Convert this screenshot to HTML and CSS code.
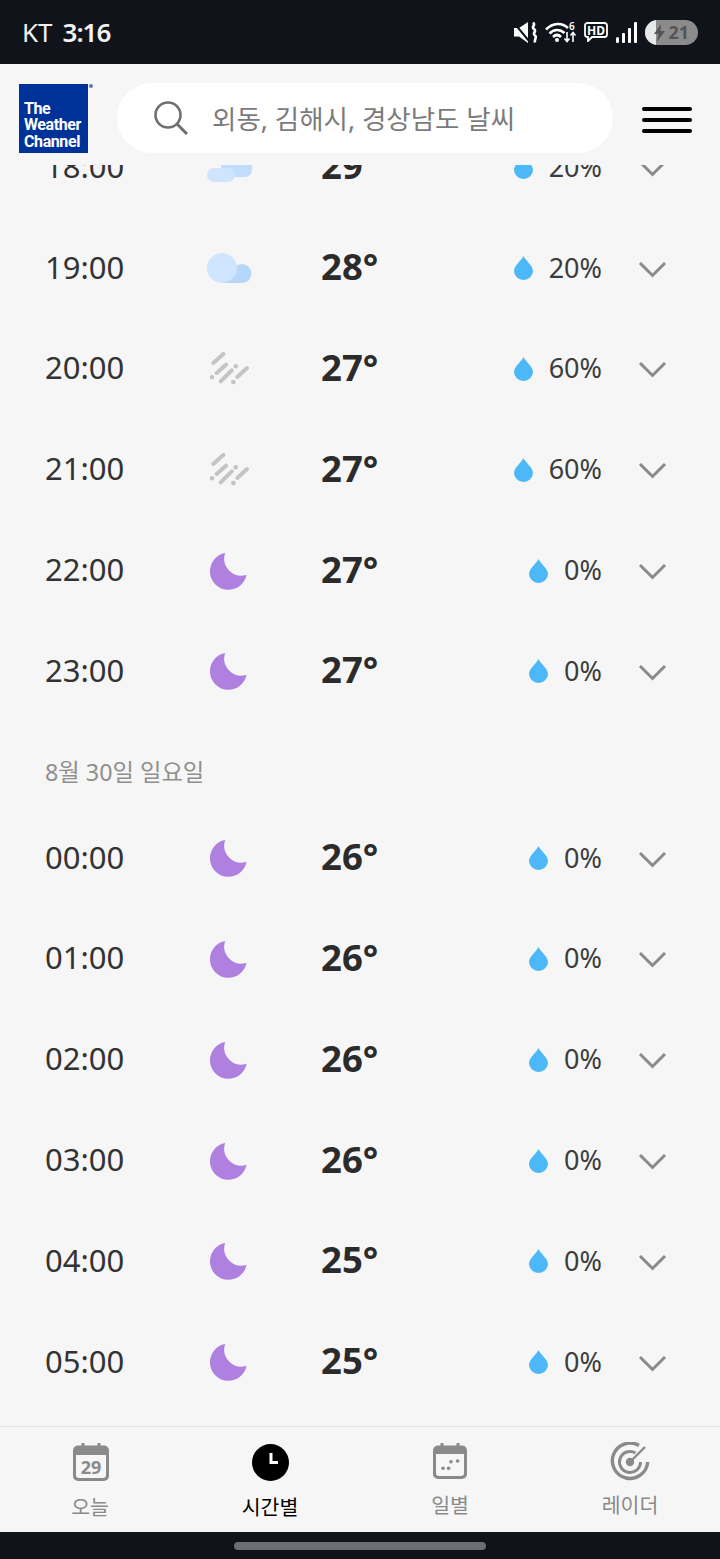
FILE: index.html
```html
<!DOCTYPE html>
<html lang="ko">
<head>
  <meta charset="UTF-8" />
  <meta name="viewport" content="width=device-width, initial-scale=1.0"/>
  <title>시간별 날씨 - The Weather Channel</title>
  <link rel="stylesheet" href="styles.css">
</head>
<body>
  <svg class="icon-defs" width="0" height="0">
    <symbol id="moon" viewBox="0 0 40 40">
      <path d="M16 1A19.5 19.5 0 1 0 38.5 24A18 18 0 0 1 16 1Z" fill="#af80e0"/>
    </symbol>
    <symbol id="cloud" viewBox="0 0 46 32">
      <path d="M16 19H36A9.5 9.5 0 0 1 36 31H16Z" fill="#b7d7fa"/>
      <circle cx="36" cy="21.5" r="9.5" fill="#b7d7fa"/>
      <path d="M16 1A15 15 0 0 1 16 31A15 15 0 0 1 16 1Z" fill="#cfe4ff"/>
    </symbol>
    <symbol id="rain" viewBox="0 0 40 33">
      <g fill="none" stroke="#c4c4c4" stroke-width="4" stroke-linecap="round">
        <path d="M4.3 11L14.3 1.9M7.7 21L17 12.7M11.7 29.3L22.7 18.3M28.3 25L38 16"/>
        <path d="M3 25.3h.1M26.7 14.3h.1M24.3 30h.1" stroke-width="4.6"/>
      </g>
    </symbol>
    <symbol id="drop" viewBox="0 0 19 24">
      <path d="M9.5 0C11.5 4.5 19 9.5 19 15A9.5 9 0 0 1 0 15C0 9.5 7.5 4.5 9.5 0Z" fill="#4db8f7"/>
    </symbol>
    <symbol id="chevron" viewBox="0 0 29 17">
      <path d="M2 2L14.5 14.5L27 2" fill="none" stroke="#8a8a8a" stroke-width="3"/>
    </symbol>
  </svg>

  <div class="status-bar">
    <div class="status-left"><span>KT</span> <b>3:16</b></div>
    <div class="status-icons">
      <svg width="23" height="21" viewBox="0 0 23 21">
        <path d="M0 6H5L14 0V21L5 14.500H0Z" fill="#fff"/>
        <path d="M0 1L15 19" stroke="#10131a" stroke-width="2"/>
        <path d="M19 0.500c3.500 3-2.500 4 1 6.500c3.500 2.500-2.500 4 1 6.500c2.500 2-1 3 0 7" fill="none" stroke="#fff" stroke-width="2.600"/>
      </svg>
      <svg width="31" height="22" viewBox="0 0 31 22">
        <g fill="none" stroke="#fff" stroke-width="2.600">
          <path d="M1 8.500C8 1.500 17 1.500 23 7"/>
          <path d="M4.500 12.500C9 8 15 8 19.500 12"/>
          <path d="M8 16C10.500 13.500 13.500 13.500 16 16"/>
        </g>
        <circle cx="12" cy="19" r="2" fill="#fff"/>
        <text x="24" y="9" class="wifi-six">6</text>
        <path d="M22 11V20M19.500 17.500L22 20.500L24.500 17.500M28 21V12M25.500 14.500L28 11.500L30.500 14.500" fill="none" stroke="#fff" stroke-width="1.600"/>
      </svg>
      <svg width="24" height="20" viewBox="0 0 24 20">
        <path d="M3.500 1H20.500A2.500 2.500 0 0 1 23 3.500V12.500A2.500 2.500 0 0 1 20.500 15H8L4 19V15H3.500A2.500 2.500 0 0 1 1 12.500V3.500A2.500 2.500 0 0 1 3.500 1Z" fill="none" stroke="#fff" stroke-width="1.800"/>
        <text x="12" y="12.500" class="hd-text">HD</text>
      </svg>
      <svg width="21" height="21" viewBox="0 0 21 21">
        <g fill="#fff">
          <rect x="0" y="15" width="3" height="6" rx="1.500"/>
          <rect x="6" y="11" width="3" height="10" rx="1"/>
          <rect x="12" y="6" width="3" height="15" rx="1"/>
          <rect x="18" y="0" width="3" height="21" rx="1"/>
        </g>
      </svg>
      <div class="battery">
        <div class="battery-fill"></div>
        <svg class="battery-bolt" width="11" height="18" viewBox="0 0 11 18">
          <path d="M7 0L0 10H4.500L3 18L11 7H6.500Z" fill="#555"/>
        </svg>
        <span class="battery-num">21</span>
      </div>
    </div>
  </div>

  <header class="top-bar">
    <div class="logo">
      <span>The</span>
      <span>Weather</span>
      <span>Channel</span>
      <i class="logo-mark"></i>
    </div>
    <div class="search">
      <svg width="34" height="34" viewBox="0 0 34 34">
        <circle cx="14" cy="14" r="12.500" fill="none" stroke="#6e6e6e" stroke-width="2.600"/>
        <path d="M23 23L33 33" stroke="#6e6e6e" stroke-width="3"/>
      </svg>
      <span class="search-text">외동, 김해시, 경상남도 날씨</span>
    </div>
    <div class="menu">
      <span></span>
      <span></span>
      <span></span>
    </div>
  </header>

  <main class="list">
    <div class="list-inner">
      <div class="row">
        <div class="time">18:00</div>
        <svg class="wx" width="46" height="32" viewBox="0 0 46 32">
          <rect x="15" y="0" width="31" height="26" rx="7" fill="#c2dcfd"/>
          <rect x="1" y="17" width="28" height="14" rx="7" fill="#cfe4ff"/>
        </svg>
        <div class="temp">29°</div>
        <div class="precip"><svg width="19" height="24"><use href="#drop"/></svg><span>20%</span></div>
        <svg class="chev" width="29" height="17"><use href="#chevron"/></svg>
      </div>
      <div class="row">
        <div class="time">19:00</div>
        <svg class="wx" width="46" height="32"><use href="#cloud"/></svg>
        <div class="temp">28°</div>
        <div class="precip"><svg width="19" height="24"><use href="#drop"/></svg><span>20%</span></div>
        <svg class="chev" width="29" height="17"><use href="#chevron"/></svg>
      </div>
      <div class="row">
        <div class="time">20:00</div>
        <svg class="wx" width="40" height="33"><use href="#rain"/></svg>
        <div class="temp">27°</div>
        <div class="precip"><svg width="19" height="24"><use href="#drop"/></svg><span>60%</span></div>
        <svg class="chev" width="29" height="17"><use href="#chevron"/></svg>
      </div>
      <div class="row">
        <div class="time">21:00</div>
        <svg class="wx" width="40" height="33"><use href="#rain"/></svg>
        <div class="temp">27°</div>
        <div class="precip"><svg width="19" height="24"><use href="#drop"/></svg><span>60%</span></div>
        <svg class="chev" width="29" height="17"><use href="#chevron"/></svg>
      </div>
      <div class="row">
        <div class="time">22:00</div>
        <svg class="wx" width="38" height="38"><use href="#moon"/></svg>
        <div class="temp">27°</div>
        <div class="precip"><svg width="19" height="24"><use href="#drop"/></svg><span>0%</span></div>
        <svg class="chev" width="29" height="17"><use href="#chevron"/></svg>
      </div>
      <div class="row">
        <div class="time">23:00</div>
        <svg class="wx" width="38" height="38"><use href="#moon"/></svg>
        <div class="temp">27°</div>
        <div class="precip"><svg width="19" height="24"><use href="#drop"/></svg><span>0%</span></div>
        <svg class="chev" width="29" height="17"><use href="#chevron"/></svg>
      </div>

      <div class="date-label">8월 30일 일요일</div>

      <div class="row">
        <div class="time">00:00</div>
        <svg class="wx" width="38" height="38"><use href="#moon"/></svg>
        <div class="temp">26°</div>
        <div class="precip"><svg width="19" height="24"><use href="#drop"/></svg><span>0%</span></div>
        <svg class="chev" width="29" height="17"><use href="#chevron"/></svg>
      </div>
      <div class="row">
        <div class="time">01:00</div>
        <svg class="wx" width="38" height="38"><use href="#moon"/></svg>
        <div class="temp">26°</div>
        <div class="precip"><svg width="19" height="24"><use href="#drop"/></svg><span>0%</span></div>
        <svg class="chev" width="29" height="17"><use href="#chevron"/></svg>
      </div>
      <div class="row">
        <div class="time">02:00</div>
        <svg class="wx" width="38" height="38"><use href="#moon"/></svg>
        <div class="temp">26°</div>
        <div class="precip"><svg width="19" height="24"><use href="#drop"/></svg><span>0%</span></div>
        <svg class="chev" width="29" height="17"><use href="#chevron"/></svg>
      </div>
      <div class="row">
        <div class="time">03:00</div>
        <svg class="wx" width="38" height="38"><use href="#moon"/></svg>
        <div class="temp">26°</div>
        <div class="precip"><svg width="19" height="24"><use href="#drop"/></svg><span>0%</span></div>
        <svg class="chev" width="29" height="17"><use href="#chevron"/></svg>
      </div>
      <div class="row">
        <div class="time">04:00</div>
        <svg class="wx" width="38" height="38"><use href="#moon"/></svg>
        <div class="temp">25°</div>
        <div class="precip"><svg width="19" height="24"><use href="#drop"/></svg><span>0%</span></div>
        <svg class="chev" width="29" height="17"><use href="#chevron"/></svg>
      </div>
      <div class="row">
        <div class="time">05:00</div>
        <svg class="wx" width="38" height="38"><use href="#moon"/></svg>
        <div class="temp">25°</div>
        <div class="precip"><svg width="19" height="24"><use href="#drop"/></svg><span>0%</span></div>
        <svg class="chev" width="29" height="17"><use href="#chevron"/></svg>
      </div>
    </div>
  </main>

  <nav class="tabs">
    <div class="tab tab-today">
      <svg width="36" height="38" viewBox="0 0 36 38">
        <path d="M10 0V5M26 0V5" stroke="#8a8a8a" stroke-width="3" stroke-linecap="round"/>
        <path d="M5 2.500H31A5 5 0 0 1 36 7.500V33A5 5 0 0 1 31 38H5A5 5 0 0 1 0 33V7.500A5 5 0 0 1 5 2.500ZM3 12V32A3 3 0 0 0 6 35H30A3 3 0 0 0 33 32V12Z" fill="#8a8a8a" fill-rule="evenodd"/>
        <text x="18" y="31" class="cal-day">29</text>
      </svg>
      <span class="tab-label">오늘</span>
    </div>
    <div class="tab tab-active">
      <svg width="37" height="37" viewBox="0 0 37 37">
        <circle cx="18.500" cy="18.500" r="18.500" fill="#000"/>
        <path d="M19 9V18.500H26" fill="none" stroke="#fff" stroke-width="3"/>
      </svg>
      <span class="tab-label">시간별</span>
    </div>
    <div class="tab">
      <svg width="34" height="36" viewBox="0 0 34 36">
        <path d="M9 0V5M25 0V5" stroke="#8a8a8a" stroke-width="3" stroke-linecap="round"/>
        <path d="M5 2.500H29A5 5 0 0 1 34 7.500V31A5 5 0 0 1 29 36H5A5 5 0 0 1 0 31V7.500A5 5 0 0 1 5 2.500ZM3 11V30A3 3 0 0 0 6 33H28A3 3 0 0 0 31 30V11Z" fill="#8a8a8a" fill-rule="evenodd"/>
        <g fill="#8a8a8a">
          <circle cx="10" cy="25.300" r="1.800"/>
          <circle cx="15.600" cy="25.300" r="1.800"/>
          <circle cx="18" cy="18.700" r="1.800"/>
          <circle cx="24.600" cy="18" r="1.800"/>
        </g>
      </svg>
      <span class="tab-label">일별</span>
    </div>
    <div class="tab tab-radar">
      <svg width="40" height="40" viewBox="0 0 40 40">
        <g fill="none" stroke="#8a8a8a">
          <path d="M29 3.500A17.700 17.700 0 1 0 37.700 20" stroke-width="3.400"/>
          <path d="M25.500 11A10.500 10.500 0 1 0 30.500 20" stroke-width="3"/>
          <path d="M20 20L35 5" stroke-width="2.400"/>
        </g>
        <circle cx="20" cy="20" r="4.200" fill="#8a8a8a"/>
      </svg>
      <span class="tab-label">레이더</span>
    </div>
  </nav>

  <div class="nav-bar"><span class="home-pill"></span></div>
</body>
</html>
```

FILE: styles.css
```css
* {
  box-sizing: border-box;
}

body {
  margin: 0;
  height: 100vh;
  display: flex;
  flex-direction: column;
  background: #f6f6f6;
  font-family: "Noto Sans", "Noto Sans CJK KR", sans-serif;
  overflow: hidden;
}

.icon-defs {
  position: absolute;
}

/* status bar */
.status-bar {
  height: 64px;
  flex-shrink: 0;
  display: flex;
  justify-content: space-between;
  align-items: center;
  padding: 0 22px;
  background: #10131a;
  color: #f2f2f2;
}

.status-left {
  font-size: 26px;
  line-height: 1;
  display: flex;
  gap: 10px;
}

.status-left b {
  font-weight: 600;
  letter-spacing: -1px;
}

.status-icons {
  display: flex;
  align-items: center;
  gap: 8px;
}

.wifi-six {
  font-size: 10px;
  font-weight: 600;
  fill: #fff;
}

.hd-text {
  font-size: 12px;
  font-weight: 700;
  fill: #fff;
  text-anchor: middle;
}

.battery {
  position: relative;
  width: 53px;
  height: 25px;
  border-radius: 13px;
  background: #8b8b8b;
  overflow: hidden;
  display: flex;
  align-items: center;
  justify-content: flex-end;
  padding-right: 9px;
}

.battery-fill {
  position: absolute;
  left: 0;
  top: 0;
  bottom: 0;
  width: 11px;
  background: #e8e8e8;
}

.battery-bolt {
  position: absolute;
  left: 9px;
  top: 4px;
}

.battery-num {
  font-size: 18px;
  font-weight: 700;
  color: #555;
  line-height: 1;
}

/* header */
.top-bar {
  height: 101px;
  flex-shrink: 0;
  display: flex;
  align-items: flex-start;
  gap: 29px;
  padding: 19px 28px 12px 19px;
  background: #f6f6f6;
}

.logo {
  position: relative;
  width: 69px;
  height: 69px;
  margin-top: 1px;
  flex-shrink: 0;
  display: flex;
  flex-direction: column;
  justify-content: flex-end;
  padding: 0 0 3px 5px;
  background: #003399;
  color: #fff;
  font-family: "Roboto", sans-serif;
  font-size: 16px;
  font-weight: 700;
  letter-spacing: -0.4px;
  line-height: 16.500px;
}

.logo-mark {
  position: absolute;
  top: 0;
  right: -5px;
  width: 4px;
  height: 4px;
  border-radius: 50%;
  background: #5a78c0;
}

.search {
  flex: 1;
  height: 70px;
  display: flex;
  align-items: center;
  gap: 24px;
  padding-left: 37px;
  background: #fff;
  border-radius: 35px;
}

.search-text {
  margin-bottom: 2px;
  font-size: 26.500px;
  color: #7b7b7b;
  white-space: nowrap;
}

.menu {
  width: 50px;
  margin-top: 24px;
  display: flex;
  flex-direction: column;
  gap: 7px;
}

.menu span {
  height: 4px;
  border-radius: 2px;
  background: #000;
}

/* hourly list */
.list {
  flex: 1;
  min-height: 0;
  overflow: hidden;
}

.list-inner {
  margin-top: -48px;
}

.row {
  height: 100.800px;
  display: grid;
  grid-template-columns: 140px 88px 130px 1fr 29px;
  align-items: center;
  padding: 0 53px 0 45px;
}

.time {
  margin-bottom: 3px;
  font-size: 31px;
  color: #333;
}

.wx {
  justify-self: center;
}

.temp {
  margin-bottom: 4px;
  padding-left: 48px;
  font-size: 36.500px;
  font-weight: 700;
  color: #2b2b2b;
  white-space: nowrap;
}

.precip {
  display: flex;
  align-items: center;
  justify-content: flex-end;
  gap: 16px;
  margin-right: 36px;
  font-size: 27px;
  color: #3c3c3c;
}

.precip span {
  margin-bottom: 2px;
}

.chev {
  margin-top: 2px;
}

.date-label {
  height: 86px;
  display: flex;
  align-items: center;
  padding: 12px 0 0 45px;
  font-size: 23.300px;
  color: #8f8f8f;
}

/* bottom tabs */
.tabs {
  height: 106px;
  flex-shrink: 0;
  display: grid;
  grid-template-columns: repeat(4, 1fr);
  padding-top: 16px;
  border-top: 1px solid #e4e4e4;
}

.tab {
  display: flex;
  flex-direction: column;
  align-items: center;
  color: #8a8a8a;
}

.tab-label {
  margin-top: 9px;
  font-size: 20.500px;
  line-height: 34px;
}

.tab-today svg {
  margin-left: 2px;
}

.tab-active {
  color: #000;
}

.tab-active svg {
  margin: 1px 0 0 1px;
}

.tab-radar svg {
  margin: -1px 0 -3px;
}

.cal-day {
  font-size: 18px;
  font-weight: 700;
  fill: #8a8a8a;
  text-anchor: middle;
}

.nav-bar {
  height: 27px;
  flex-shrink: 0;
  display: flex;
  justify-content: center;
  padding-top: 10px;
  background: #10131a;
}

.home-pill {
  width: 252px;
  height: 8px;
  border-radius: 4px;
  background: #6b6e72;
}
```
